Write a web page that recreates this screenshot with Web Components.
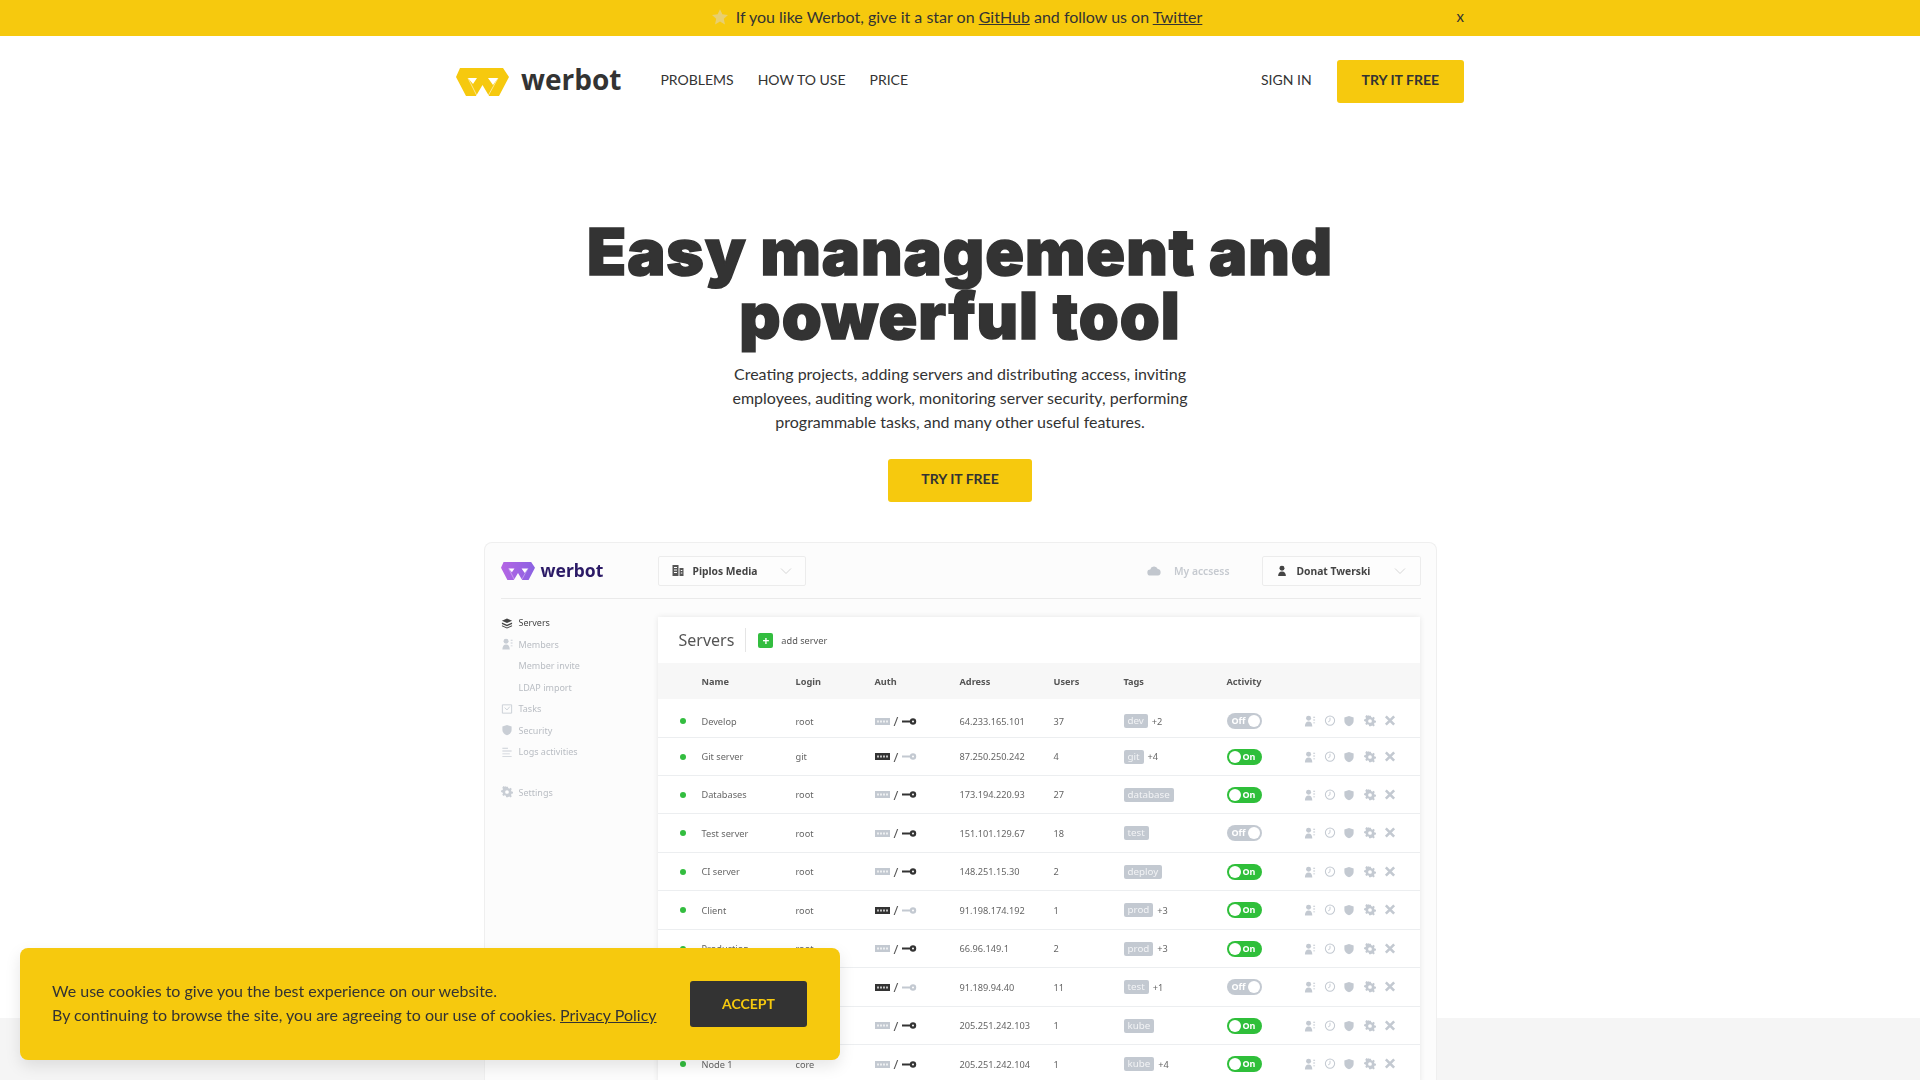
<!DOCTYPE html>
<html lang="en">
<head>
<meta charset="utf-8">
<title>Werbot</title>
<style>
  html, body { margin: 0; height: 1080px; overflow: hidden; background: #fff; }
  body { font-family: Lato, "Liberation Sans", sans-serif; color: #333; }
</style>
</head>
<body>
<wb-banner></wb-banner>
<wb-header></wb-header>
<wb-hero></wb-hero>
<wb-band></wb-band>
<wb-cookie></wb-cookie>

<script>
const YELLOW = '#f6c90e';

// logo shape, shared by the page header and the app screenshot
const logoSvg = (w, h, fill, defs = '') => `
  <svg width="${w}" height="${h}" viewBox="0 0 53 28" style="display:block">
    ${defs}
    <path fill="${fill}" d="M4 0H47L53 9 43 28H33L26.5 17 20 28H10L0 9Z"/>
    <path fill="#fff" d="M12 10H21L17 16ZM32 10H42L37 17Z"/>
    <path fill="none" stroke="#fff" stroke-width=".7" opacity=".8" d="M12 10 21 28M42 10 32 28"/>
  </svg>`;

const ICONS = {
  star: '<path d="M8 1l2.100 4.600 5 .6-3.700 3.400 1 5L8 12.100 3.600 14.600l1-5L.9 6.200l5-.6z"/>',
  building: '<path d="M1 1h6v11H1zM8 4h4v8H8z"/><path fill="#fff" d="M2.500 3h3v1h-3zM2.500 5.500h3v1h-3zM2.500 8h3v1h-3zM9.300 6h1.500v1H9.300zM9.300 8.500h1.500v1H9.300z"/>',
  person: '<circle cx="6" cy="3.500" r="2.700"/><path d="M1.800 12c0-3 1.500-5 4.200-5s4.200 2 4.200 5z"/>',
  cloud: '<path d="M3.500 10.500a3 3 0 0 1-.3-6A4 4 0 0 1 10.800 4a3.300 3.300 0 0 1 .2 6.500z"/>',
  stack: '<path d="M6 1.500l5.500 2.500L6 6.500.5 4zM.5 6L6 8.500 11.500 6v1.500L6 10 .5 7.500zM.5 9L6 11.500 11.500 9v1L6 12.500.5 10z"/>',
  members: '<circle cx="5" cy="3.500" r="2.700"/><path d="M1 12.500c0-3.500 1.500-5.500 4-5.500s4 2 4 5.500zM10 2h2v1h-2zM10 5h2v1h-2zM10 8h2v1h-2z"/>',
  tasks: '<path fill="none" stroke="currentColor" d="M1 2h10v9H1zM3.500 5l2.500 2.500L9 4"/>',
  shield: '<path d="M6 1l5 1.600V6.500c0 3-2.200 4.800-5 5.800-2.800-1-5-2.800-5-5.800V2.600z"/>',
  logs: '<path d="M1 2h6v1H1zM1 5h10v1H1zM1 8h8v1H1zM1 11h10v1H1z"/>',
  gear: '<path d="M5 .8h2l.4 1.700 1.300.6 1.500-.9 1.400 1.400-.9 1.500.6 1.300 1.700.4v2l-1.700.4-.6 1.300.9 1.500-1.400 1.400-1.500-.9-1.300.6L7 13.200H5l-.4-1.700-1.300-.6-1.500.9L.4 10.400l.9-1.500-.6-1.300L-1 7.200v-2l1.700-.4.6-1.300-.9-1.500L1.800.1l1.500.9 1.300-.6z" transform="translate(.5 0) scale(.92)"/><circle cx="6" cy="6.500" r="2" fill="#fff"/>',
  clock: '<circle cx="6" cy="6" r="5" fill="none" stroke="currentColor" stroke-width="1.100"/><path fill="none" stroke="currentColor" d="M6 3v3.200L4 7.500"/>',
  cross: '<path fill="none" stroke="currentColor" stroke-width="2.800" d="M1.500 1.500l9 9M10.500 1.500l-9 9"/>',
  chevron: '<path fill="none" stroke="currentColor" d="M1 3l5 5 5-5"/>',
  pw: '<path d="M0 2.500h15v7H0z"/><path fill="#fff" opacity=".7" d="M2 5h2v2H2zM5 5h2v2H5zM8 5h2v2H8zM11 5h2v2h-2z"/>',
  key: '<path d="M0 5h8.500v2H0z"/><circle cx="11" cy="6" r="3.200"/><circle cx="11" cy="6" r="1" fill="#fff"/>'
};

const icon = (name, size = 12, color = 'currentColor', vb = '0 0 12 13') =>
  `<svg width="${size}" height="${size}" viewBox="${vb}" fill="${color}" style="color:${color};display:block;flex:none">${ICONS[name]}</svg>`;

class WbBanner extends HTMLElement {
  constructor() {
    super();
    this.attachShadow({ mode: 'open' }).innerHTML = `
      <style>
        :host { display: block; background: ${YELLOW}; height: 36px; font-size: 16px; color: #333; position: relative; }
        .msg { height: 100%; padding: 0 7px 3px 0; box-sizing: border-box; display: flex; align-items: center; justify-content: center; gap: 7px; }
        a { color: inherit; text-decoration: underline; }
        .close { position: absolute; right: 456px; top: 6px; font-size: 15px; line-height: 20px; }
      </style>
      <div class="msg">
        ${icon('star', 18, '#e8cf70', '0 0 16 16')}
        <span>If you like Werbot, give it a star on <a href="#">GitHub</a> and follow us on <a href="#">Twitter</a></span>
      </div>
      <span class="close">x</span>`;
  }
}

class WbButton extends HTMLElement {
  constructor() {
    super();
    this.attachShadow({ mode: 'open' }).innerHTML = `
      <style>
        :host { display: inline-flex; align-items: center; justify-content: center; box-sizing: border-box;
                height: 43px; padding: 0 25px 4px; background: ${YELLOW}; color: #333; border-radius: 3px;
                font-size: 14px; font-weight: 700; text-transform: uppercase; white-space: nowrap; }
      </style><slot></slot>`;
  }
}

class WbHeader extends HTMLElement {
  constructor() {
    super();
    this.attachShadow({ mode: 'open' }).innerHTML = `
      <style>
        :host { display: block; }
        .inner { width: 1008px; margin: 0 auto; height: 91px; box-sizing: border-box; display: flex; align-items: center; }
        .brand { display: flex; align-items: center; gap: 12px; font: 700 28px/1 "Open Sans", sans-serif; color: #333; margin-right: 39px; }
        .brand span { position: relative; top: -3px; }
        nav { display: flex; gap: 24px; font-size: 14px; color: #333; flex: 1; padding-bottom: 4px; }
        .signin { font-size: 14px; margin-right: 25px; padding-bottom: 4px; }
      </style>
      <div class="inner">
        <div class="brand">${logoSvg(53, 28, YELLOW)}<span>werbot</span></div>
        <nav><span>PROBLEMS</span><span>HOW TO USE</span><span>PRICE</span></nav>
        <span class="signin">SIGN IN</span>
        <wb-button>Try it free</wb-button>
      </div>`;
  }
}

class WbHero extends HTMLElement {
  constructor() {
    super();
    this.attachShadow({ mode: 'open' }).innerHTML = `
      <style>
        :host { display: block; height: 891px; text-align: center; position: relative; z-index: 1; }
        h1 { margin: 0; padding-top: 93px; font: 900 64px/64px Inter, sans-serif; letter-spacing: 1px; color: #333; -webkit-text-stroke: 1.500px #333; }
        p { margin: 14px auto 25px; width: 470px; font-size: 16px; line-height: 24px; color: #333; }
        wb-button { width: 144px; }
        wb-shot { margin-top: 40px; }
      </style>
      <h1>Easy management and<br>powerful tool</h1>
      <p>Creating projects, adding servers and distributing access, inviting employees, auditing work, monitoring server security, performing programmable tasks, and many other useful features.</p>
      <wb-button>Try it free</wb-button>
      <wb-shot></wb-shot>`;
  }
}

class WbBand extends HTMLElement {
  constructor() {
    super();
    this.attachShadow({ mode: 'open' }).innerHTML = `
      <style>:host { display: block; height: 62px; background: #f5f5f5; }</style>`;
  }
}

// the app screenshot that sits under the hero
class WbShot extends HTMLElement {
  constructor() {
    super();
    const side = [
      ['stack', 'Servers', 'on'],
      ['members', 'Members', ''],
      ['', 'Member invite', ''],
      ['', 'LDAP import', ''],
      ['tasks', 'Tasks', ''],
      ['shield', 'Security', ''],
      ['logs', 'Logs activities', '']
    ];
    const item = ([ic, label, cls]) => `
      <div class="item ${cls}">
        <span class="ic">${ic ? icon(ic, 12, cls ? '#444' : '#c9ced5') : ''}</span>${label}
      </div>`;

    this.attachShadow({ mode: 'open' }).innerHTML = `
      <style>
        :host { display: block; width: 953px; height: 560px; margin: 0 auto; box-sizing: border-box; overflow: hidden;
                background: #fcfcfc; border: 1px solid #efefef; border-bottom: 0; border-radius: 8px 8px 0 0; text-align: left;
                font: 9.200px "Noto Sans", sans-serif; color: #555; }
        .blur { filter: blur(.4px); }
        .top { display: flex; align-items: center; height: 56px; margin: 0 15px 0 16px; border-bottom: 1px solid #eaeaea; box-sizing: border-box; }
        .brand { display: flex; align-items: center; gap: 6px; width: 157px; font: 700 17.500px/1 "Noto Sans", sans-serif; color: #2b1a66; }
        .select { display: flex; align-items: center; height: 30px; box-sizing: border-box; background: #fdfdfd; border: 1px solid #ececec; border-radius: 2px;
                  font-weight: 700; font-size: 10.300px; color: #444; }
        .select.org { width: 148px; padding: 0 13px 0 12px; }
        .select.user { width: 159px; padding: 0 14px 0 13px; }
        .select span { flex: 1; padding-left: 9px; }
        .access { margin-left: auto; display: flex; align-items: center; gap: 13px; margin-right: 32px; color: #c6cad0; font-weight: 600; font-size: 10.300px; }
        .body { display: flex; padding-top: 18px; }
        aside { width: 173px; padding-left: 16px; box-sizing: border-box; flex: none; margin-top: -5px; }
        .item { display: flex; align-items: center; height: 21.500px; color: #b9bdc3; font-size: 9px; }
        .item.on { color: #444; }
        .ic { width: 18px; flex: none; }
        .item.gap { margin-top: 19px; }
        .panel { width: 762px; background: #fff; box-shadow: 0 0 6px rgba(0,0,0,.09); flex: none; }
        .head { display: flex; align-items: center; height: 46px; padding-left: 21px; }
        .head h2 { margin: 0; font: 400 16px "Noto Sans", sans-serif; color: #555; padding-right: 11px; border-right: 1px solid #e5e5e5; line-height: 24px; }
        .plus { width: 15px; height: 15px; margin: 0 8px 0 12px; border-radius: 2px; background: #33bd3f; color: #fff; font: 700 12px/15px "Noto Sans", sans-serif; text-align: center; }
      </style>
      <div class="blur">
        <div class="top">
          <div class="brand">${logoSvg(34, 18, 'url(#wbp)', '<defs><linearGradient id="wbp" x1="0" x2="1"><stop offset="0" stop-color="#b565e4"/><stop offset="1" stop-color="#8a62e2"/></linearGradient></defs>')}<span>werbot</span></div>
          <div class="select org">${icon('building', 13, '#555')}<span>Piplos Media</span>${icon('chevron', 12, '#d6d6d6', '0 0 12 11')}</div>
          <div class="access">${icon('cloud', 14, '#c2c7ce', '0 0 14 12')}My accsess</div>
          <div class="select user">${icon('person', 12, '#444')}<span>Donat Twerski</span>${icon('chevron', 12, '#d6d6d6', '0 0 12 11')}</div>
        </div>
        <div class="body">
          <aside>
            ${side.map(item).join('')}
            <div class="item gap"><span class="ic">${icon('gear', 12, '#c9ced5')}</span>Settings</div>
          </aside>
          <div class="panel">
            <div class="head"><h2>Servers</h2><span class="plus">+</span>add server</div>
            <wb-table></wb-table>
          </div>
        </div>
      </div>`;
  }
}

class WbTable extends HTMLElement {
  constructor() {
    super();
    // name, login, password auth active, address, users, tag, extra tags, on, row height
    const rows = [
      ['Develop', 'root', 0, '64.233.165.101', 37, 'dev', '+2', 0, 39],
      ['Git server', 'git', 1, '87.250.250.242', 4, 'git', '+4', 1, 38],
      ['Databases', 'root', 0, '173.194.220.93', 27, 'database', '', 1, 38],
      ['Test server', 'root', 0, '151.101.129.67', 18, 'test', '', 0, 39],
      ['CI server', 'root', 0, '148.251.15.30', 2, 'deploy', '', 1, 38],
      ['Client', 'root', 1, '91.198.174.192', 1, 'prod', '+3', 1, 39],
      ['Production', 'root', 0, '66.96.149.1', 2, 'prod', '+3', 1, 38],
      ['', '', 1, '91.189.94.40', 11, 'test', '+1', 0, 39],
      ['', '', 0, '205.251.242.103', 1, 'kube', '', 1, 38],
      ['Node 1', 'core', 0, '205.251.242.104', 1, 'kube', '+4', 1, 39]
    ];
    const GREY = '#c3c9d1';
    const row = (r, i) => `
      <div class="row" style="height:${r[8]}px;${i === 0 ? 'padding-top:6px' : ''}">
        <span class="dot"></span>
        <span>${r[0]}</span>
        <span>${r[1]}</span>
        <span class="auth">
          ${icon('pw', 15, r[2] ? '#333' : GREY, '0 0 15 12')}<i>/</i>${icon('key', 15, r[2] ? GREY : '#333', '0 0 15 12')}
        </span>
        <span>${r[3]}</span>
        <span>${r[4]}</span>
        <span class="tags"><b>${r[5]}</b>${r[6]}</span>
        <span class="toggle ${r[7] ? 'on' : 'off'}">${r[7] ? 'On' : 'Off'}</span>
        <span class="acts">
          ${icon('members', 12, GREY, '0 0 13 13')}
          <em style="width:8px"></em>${icon('clock', 12, GREY)}
          <em style="width:7px"></em>${icon('shield', 12, GREY)}
          <em style="width:9px"></em>${icon('gear', 12, GREY)}
          <em style="width:8px"></em>${icon('cross', 12, GREY)}
        </span>
      </div>`;

    this.attachShadow({ mode: 'open' }).innerHTML = `
      <style>
        :host { display: block; font-size: 9.200px; color: #666; }
        .row { display: grid; grid-template-columns: 44px 94px 79px 85px 94px 70px 103px 77px 1fr; align-items: center;
               border-bottom: 1px solid #eceef0; box-sizing: border-box; }
        .row.th { height: 36px; background: #f7f7f7; border: 0; font-weight: 700; color: #555; }
        .dot { width: 6px; height: 6px; border-radius: 50%; background: #33bd3f; margin-left: 22px; }
        .auth { display: flex; align-items: center; gap: 4px; }
        .auth i { font: 400 13px "Noto Sans", sans-serif; color: #555; }
        .tags { display: flex; align-items: center; gap: 4px; }
        .tags b { font-weight: 400; background: #c3c9d1; color: #f2f3f5; padding: 1px 4px; border-radius: 2px; line-height: 12px; font-size: 9.800px; }
        .toggle { position: relative; width: 35px; height: 16px; border-radius: 8px; box-sizing: border-box; color: #fff;
                  font-weight: 700; font-size: 9px; line-height: 15px; }
        .toggle::after { content: ""; position: absolute; top: 2px; width: 12px; height: 12px; border-radius: 50%; background: #fff; }
        .toggle.on { background: #2fbf3a; padding-left: 16px; }
        .toggle.on::after { left: 2px; }
        .toggle.off { background: #c3c9d1; padding-left: 5px; }
        .toggle.off::after { right: 2px; }
        .acts { display: flex; align-items: center; }
        em { display: block; flex: none; }
      </style>
      <div class="row th"><span></span><span>Name</span><span>Login</span><span>Auth</span><span>Adress</span><span>Users</span><span>Tags</span><span>Activity</span><span></span></div>
      ${rows.map(row).join('')}`;
  }
}

class WbCookie extends HTMLElement {
  constructor() {
    super();
    this.attachShadow({ mode: 'open' }).innerHTML = `
      <style>
        :host { position: fixed; left: 20px; bottom: 20px; z-index: 5; width: 820px; height: 112px; box-sizing: border-box;
                padding: 0 33px 0 32px; display: flex; align-items: center; justify-content: space-between;
                background: ${YELLOW}; border-radius: 8px; box-shadow: 0 6px 16px rgba(0,0,0,.1); font-size: 16px; line-height: 24px; color: #333; }
        a { color: inherit; text-decoration: underline; }
        .text { padding-bottom: 2px; }
        .accept { display: flex; align-items: center; justify-content: center; width: 117px; height: 46px; background: #333; color: ${YELLOW};
                  border-radius: 3px; font-size: 14px; font-weight: 700; }
      </style>
      <div class="text">We use cookies to give you the best experience on our website.<br>
      By continuing to browse the site, you are agreeing to our use of cookies. <a href="#">Privacy Policy</a></div>
      <span class="accept">ACCEPT</span>`;
  }
}

customElements.define('wb-banner', WbBanner);
customElements.define('wb-button', WbButton);
customElements.define('wb-header', WbHeader);
customElements.define('wb-hero', WbHero);
customElements.define('wb-band', WbBand);
customElements.define('wb-shot', WbShot);
customElements.define('wb-table', WbTable);
customElements.define('wb-cookie', WbCookie);
</script>
</body>
</html>
